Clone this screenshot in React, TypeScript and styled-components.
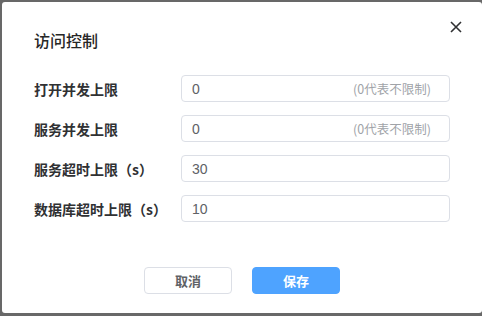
import React from "react";
import styled, { createGlobalStyle } from "styled-components";

const GlobalStyle = createGlobalStyle`
  html, body {
    margin: 0;
    padding: 0;
    overflow: hidden;
  }
  body {
    font-family: "Liberation Sans", "Noto Sans CJK SC", sans-serif;
  }
`;

type Field = {
  label: string;
  value: string;
  hint?: string;
};

const fields: Field[] = [
  { label: "打开并发上限", value: "0", hint: "(0代表不限制)" },
  { label: "服务并发上限", value: "0", hint: "(0代表不限制)" },
  { label: "服务超时上限（s）", value: "30" },
  { label: "数据库超时上限（s）", value: "10" },
];

export default function App() {
  return (
    <>
      <GlobalStyle />
      <Backdrop>
        <Dialog>
          <CloseButton aria-label="关闭">
            <svg width="12" height="12" viewBox="0 0 12 12">
              <path d="M1 1L11 11M11 1L1 11" stroke="#303133" strokeWidth="1.6" />
            </svg>
          </CloseButton>
          <Title>访问控制</Title>
          <Form>
            {fields.map((f) => (
              <React.Fragment key={f.label}>
                <Label>{f.label}</Label>
                <InputBox>
                  <Input defaultValue={f.value} />
                  {f.hint && <Hint>{f.hint}</Hint>}
                </InputBox>
              </React.Fragment>
            ))}
          </Form>
          <Footer>
            <Button>取消</Button>
            <Button $primary>保存</Button>
          </Footer>
        </Dialog>
      </Backdrop>
    </>
  );
}

const Backdrop = styled.div`
  width: 482px;
  height: 316px;
  background: #686868;
  padding: 2px 0 0 2px;
  box-sizing: border-box;
`;

const Dialog = styled.div`
  position: relative;
  width: 480px;
  height: 311px;
  background: #fff;
  border-radius: 3px;
  box-sizing: border-box;
  padding: 26px 32px 19px 32px;
  display: flex;
  flex-direction: column;
`;

const CloseButton = styled.button`
  position: absolute;
  top: 18px;
  right: 19px;
  width: 14px;
  height: 14px;
  padding: 0;
  border: none;
  background: none;
  display: flex;
  align-items: center;
  justify-content: center;
  cursor: pointer;
`;

const Title = styled.div`
  font-family: "Noto Sans CJK SC", sans-serif;
  font-size: 16px;
  font-weight: 500;
  line-height: 24px;
  color: #262626;
`;

const Form = styled.div`
  margin-top: 23px;
  display: grid;
  grid-template-columns: 147px 269px;
  grid-auto-rows: 27px;
  row-gap: 13px;
  align-items: center;
`;

const Label = styled.div`
  font-family: "Noto Sans CJK SC", sans-serif;
  font-size: 14px;
  font-weight: 700;
  color: #303133;
  white-space: nowrap;
`;

const InputBox = styled.div`
  height: 27px;
  box-sizing: border-box;
  border: 1px solid #dcdfe6;
  border-radius: 4px;
  display: flex;
  align-items: center;
  padding: 0 18px 0 10px;
`;

const Input = styled.input`
  flex: 1;
  min-width: 0;
  border: none;
  outline: none;
  padding: 0;
  font-family: "Liberation Sans", "Noto Sans CJK SC", sans-serif;
  font-size: 14px;
  color: #606266;
  background: transparent;
`;

const Hint = styled.span`
  font-family: "Noto Sans CJK SC", sans-serif;
  font-size: 12.5px;
  color: #a0a3a8;
  white-space: nowrap;
`;

const Footer = styled.div`
  margin-top: auto;
  display: flex;
  justify-content: center;
  gap: 20px;
`;

const Button = styled.button<{ $primary?: boolean }>`
  width: 88px;
  height: 27px;
  box-sizing: border-box;
  border-radius: 4px;
  border: 1px solid ${(p) => (p.$primary ? "#4ea3ff" : "#dcdfe6")};
  background: ${(p) => (p.$primary ? "#4ea3ff" : "#fff")};
  color: ${(p) => (p.$primary ? "#fff" : "#606266")};
  font-family: "Noto Sans CJK SC", sans-serif;
  font-size: 13px;
  font-weight: 700;
  padding: 0;
  cursor: pointer;
`;
